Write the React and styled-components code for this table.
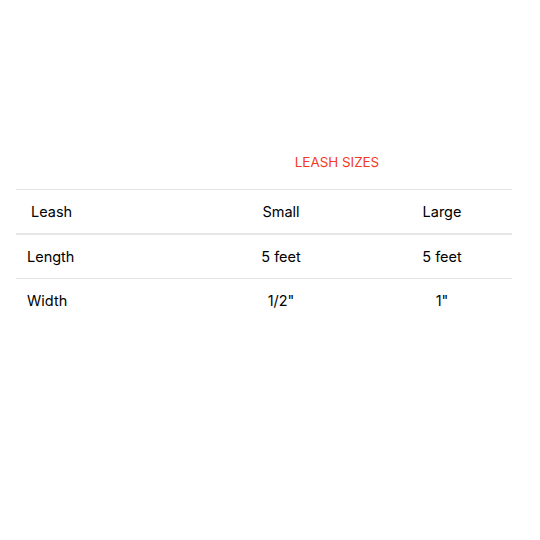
import React from 'react';
import styled, { createGlobalStyle } from 'styled-components';

const GlobalStyle = createGlobalStyle`
  html, body {
    margin: 0;
    padding: 0;
    background: #ffffff;
  }
  body {
    font-family: Inter, "Noto Sans", "Liberation Sans", sans-serif;
    color: #000000;
  }
`;

const rows = [
  { label: 'Length', small: '5 feet', large: '5 feet' },
  { label: 'Width', small: '1/2"', large: '1"' },
];

const App = () => {
  return (
    <>
      <GlobalStyle />
      <Page>
        <Title>LEASH SIZES</Title>
        <Table>
          <Row $head>
            <Cell $first $head>Leash</Cell>
            <Cell>Small</Cell>
            <Cell>Large</Cell>
          </Row>
          {rows.map((row) => (
            <Row key={row.label}>
              <Cell $first>{row.label}</Cell>
              <Cell>{row.small}</Cell>
              <Cell>{row.large}</Cell>
            </Row>
          ))}
        </Table>
      </Page>
    </>
  );
};

const Page = styled.div`
  padding: 152px 28px 0 16px;
`;

const Title = styled.div`
  font-size: 13.4px;
  font-weight: 400;
  color: #f23a22;
  text-align: center;
  padding-left: 146px;
  height: 37px;
  line-height: 20px;
`;

const Table = styled.div`
  border-top: 1px solid #e4e4e4;
`;

const Row = styled.div`
  display: grid;
  grid-template-columns: 174px 182px 140px;
  height: 43px;
  align-items: center;
  border-bottom: ${(p) => (p.$head ? '2px solid #e6e6e6' : '1px solid #e4e4e4')};

  &:last-child {
    border-bottom: none;
  }
`;

const Cell = styled.div`
  font-size: 14.5px;
  font-weight: 400;
  text-align: ${(p) => (p.$first ? 'left' : 'center')};
  padding-left: ${(p) => (p.$first ? (p.$head ? '15px' : '11px') : '0')};
`;

export default App;
